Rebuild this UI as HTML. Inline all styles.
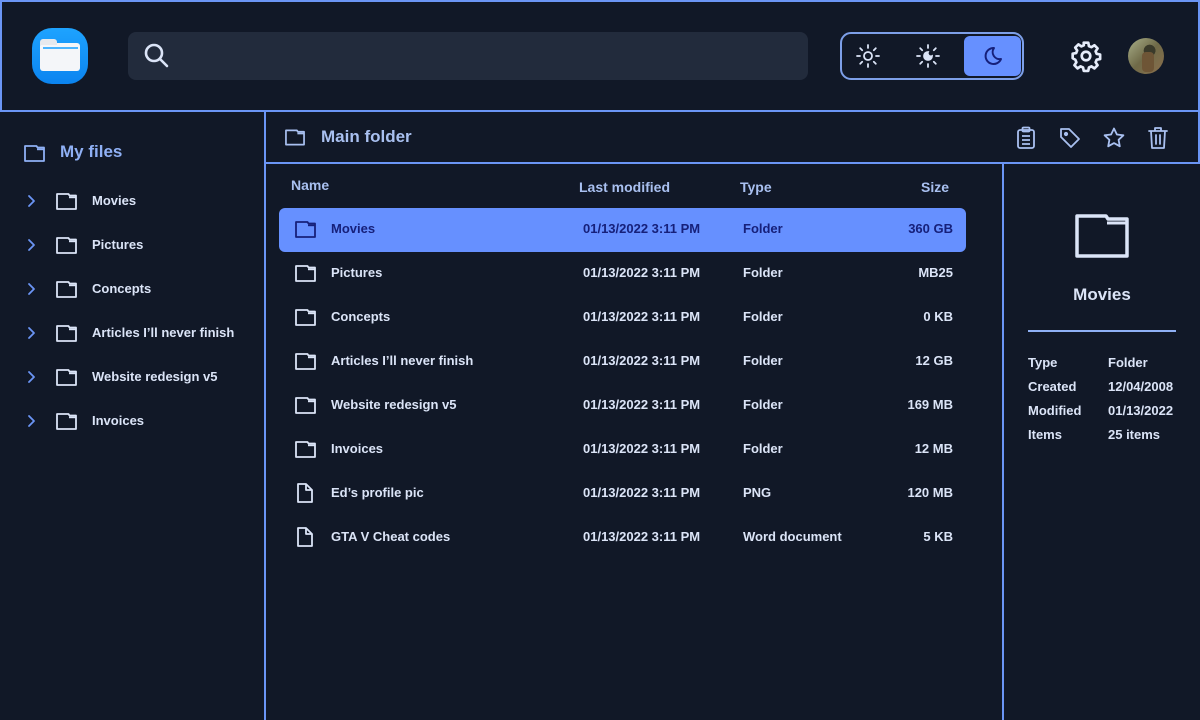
<!DOCTYPE html>
<html><head><meta charset="utf-8"><style>
*{margin:0;padding:0;box-sizing:border-box}
body{width:1200px;height:720px;background:#111827;font-family:"Liberation Sans",sans-serif;color:#dbe4f7;position:relative;overflow:hidden;font-weight:bold}
.abs{position:absolute}
.line{position:absolute;background:#6b95f5}
.t{position:absolute;font-size:13px;line-height:16px;white-space:nowrap}
svg{position:absolute;overflow:visible}
</style></head><body>
<div class="line" style="left:0;top:0;width:1200px;height:2px"></div>
<div class="line" style="left:0;top:0;width:2px;height:112px"></div>
<div class="line" style="left:1198px;top:0;width:2px;height:164px"></div>
<div class="line" style="left:0;top:110px;width:1200px;height:2px"></div>
<div class="line" style="left:264px;top:112px;width:2px;height:608px"></div>
<div class="line" style="left:264px;top:162px;width:936px;height:2px"></div>
<div class="line" style="left:1002px;top:164px;width:2px;height:556px"></div>

<div class="abs" style="left:32px;top:28px;width:56px;height:56px;border-radius:20px;background:linear-gradient(#1ea3ff,#0b84f0)"></div>
<div class="abs" style="left:40px;top:43px;width:40px;height:28px;border-radius:3px;background:#f4f6f9"></div>
<div class="abs" style="left:40px;top:39px;width:17px;height:6px;border-radius:3px 3px 0 0;background:#e6e9ee"></div>
<div class="abs" style="left:43px;top:47px;width:35px;height:2px;background:#4bb5ff"></div>

<div class="abs" style="left:128px;top:32px;width:680px;height:48px;border-radius:8px;background:#222b3c"></div>
<svg style="left:143px;top:42px" width="26" height="26" viewBox="0 0 26 26"><circle cx="11" cy="11" r="8" fill="none" stroke="#dbe4f7" stroke-width="2.6"/><path d="M17 17L24 24" stroke="#dbe4f7" stroke-width="2.6" stroke-linecap="round"/></svg>

<div class="abs" style="left:840px;top:32px;width:184px;height:48px;border:2px solid #7d9fe8;border-radius:11px"></div>
<div class="abs" style="left:964px;top:36px;width:57px;height:40px;border-radius:6px;background:#6690ff"></div>
<svg style="left:856px;top:44px" width="24" height="24" viewBox="0 0 24 24" fill="none" stroke="#dbe4f7" stroke-width="1.8" stroke-linecap="round"><circle cx="12" cy="12" r="4"/><path d="M12 1v3M12 20v3M1 12h3M20 12h3M4.2 4.2l2 2M17.8 17.8l2 2M4.2 19.8l2-2M17.8 6.2l2-2"/></svg>
<svg style="left:916px;top:44px" width="24" height="24" viewBox="0 0 24 24" fill="none" stroke="#dbe4f7" stroke-width="1.8" stroke-linecap="round"><path d="M12 8a4 4 0 1 0 4 4a3 3 0 0 1-4-4z" fill="#dbe4f7"/><path d="M12 1v3M12 20v3M1 12h3M20 12h3M4.2 4.2l2 2M17.8 17.8l2 2M4.2 19.8l2-2M17.8 6.2l2-2"/></svg>
<svg style="left:981px;top:45px" width="22" height="22" viewBox="0 0 22 22"><path d="M13 3a8 8 0 1 0 7 11a7 7 0 0 1-7-11z" fill="none" stroke="#16207a" stroke-width="2" stroke-linejoin="round"/></svg>

<svg style="left:1070px;top:40px" width="32" height="32" viewBox="0 0 24 24" fill="none" stroke="#e6ecfa" stroke-width="2" stroke-linejoin="round"><path d="M10.3 2h3.4l.5 2.6 1.9.8 2.2-1.5 2.4 2.4-1.5 2.2.8 1.9 2.6.5v3.4l-2.6.5-.8 1.9 1.5 2.2-2.4 2.4-2.2-1.5-1.9.8-.5 2.6h-3.4l-.5-2.6-1.9-.8-2.2 1.5-2.4-2.4 1.5-2.2-.8-1.9L2 13.7v-3.4l2.6-.5.8-1.9-1.5-2.2 2.4-2.4 2.2 1.5 1.9-.8z"/><circle cx="12" cy="12" r="3.2"/></svg>
<div class="abs" style="left:1128px;top:38px;width:36px;height:36px;border-radius:50%;background:radial-gradient(circle at 60% 35%,#3a3a2a 0 18%,transparent 19%),linear-gradient(135deg,#a9b08a,#6f6a48 50%,#8a6e4c)"></div>
<div class="abs" style="left:1142px;top:52px;width:12px;height:20px;border-radius:4px;background:#6e5536"></div>

<svg style="left:24px;top:145px" width="21" height="17" viewBox="0 0 21 17" fill="none" stroke="#8fb0f5" stroke-width="1.8" stroke-linejoin="round"><path d="M1 1H12.5L13.5 2.5H20V16H1Z"/><path d="M13 4.3H19.5"/></svg>
<div class="t" style="left:60px;top:142px;font-size:17px;line-height:20px;color:#8fb0f5">My files</div>
<div id="side"></div>

<svg style="left:285px;top:129px" width="20" height="17" viewBox="0 0 21 17" fill="none" stroke="#a9c0f0" stroke-width="1.8" stroke-linejoin="round"><path d="M1 1H12.5L13.5 2.5H20V16H1Z"/><path d="M13 4.3H19.5"/></svg>
<div class="t" style="left:321px;top:127px;font-size:17px;line-height:20px;color:#a9c0f0">Main folder</div>
<svg style="left:1016px;top:126px" width="20" height="24" viewBox="0 0 20 24" fill="none" stroke="#a9c0f0" stroke-width="1.8" stroke-linejoin="round"><rect x="2" y="4" width="16" height="18" rx="2"/><rect x="6.5" y="1.5" width="7" height="4" rx="1"/><path d="M6 10h8M6 14h8M6 18h8"/></svg>
<svg style="left:1058px;top:126px" width="24" height="24" viewBox="0 0 24 24" fill="none" stroke="#a9c0f0" stroke-width="1.8" stroke-linejoin="round"><path d="M3 3h8l10 10-8 8L3 11z"/><circle cx="8" cy="8" r="1.2" fill="#a9c0f0"/></svg>
<svg style="left:1102px;top:126px" width="24" height="24" viewBox="0 0 24 24" fill="none" stroke="#a9c0f0" stroke-width="1.8" stroke-linejoin="round"><path d="M12 2.5l2.9 6 6.5.8-4.8 4.5 1.2 6.5L12 17.1l-5.8 3.2 1.2-6.5L2.6 9.3l6.5-.8z"/></svg>
<svg style="left:1147px;top:126px" width="22" height="24" viewBox="0 0 22 24" fill="none" stroke="#a9c0f0" stroke-width="1.8" stroke-linecap="round" stroke-linejoin="round"><path d="M2 5h18M8 5V2h6v3M4 5l1 17h12l1-17M9 9v9M13 9v9"/></svg>

<div class="t" style="left:291px;top:177px;font-size:14px;color:#a9c0f0">Name</div>
<div class="t" style="left:579px;top:179px;font-size:14px;color:#a9c0f0">Last modified</div>
<div class="t" style="left:740px;top:179px;font-size:14px;color:#a9c0f0">Type</div>
<div class="t" style="left:900px;width:49px;text-align:right;top:179px;font-size:14px;color:#a9c0f0">Size</div>
<div class="abs" style="left:279px;top:208px;width:687px;height:44px;border-radius:6px;background:#6690ff"></div>
<div id="rows"></div>

<svg style="left:1075px;top:214px" width="54" height="44" viewBox="0 0 54 44" fill="none" stroke="#dbe4f7" stroke-width="3.5" stroke-linejoin="round"><path d="M2 2H31L33 5H52V42H2Z"/><path d="M32 9H51" stroke-width="3"/></svg>
<div class="t" style="left:1002px;width:200px;text-align:center;top:285px;font-size:17px;line-height:20px">Movies</div>
<div class="abs" style="left:1028px;top:330px;width:148px;height:2px;background:#8fb0f5"></div>
<div class="t" style="left:1028px;top:355px">Type</div><div class="t" style="left:1108px;top:355px">Folder</div>
<div class="t" style="left:1028px;top:379px">Created</div><div class="t" style="left:1108px;top:379px">12/04/2008</div>
<div class="t" style="left:1028px;top:403px">Modified</div><div class="t" style="left:1108px;top:403px">01/13/2022</div>
<div class="t" style="left:1028px;top:427px">Items</div><div class="t" style="left:1108px;top:427px">25 items</div>

<script>
var fold='<path d="M1 1H12.5L13.5 2.5H20V16H1Z"/><path d="M13 4.3H19.5"/>';
var s='',names=["Movies","Pictures","Concepts","Articles I’ll never finish","Website redesign v5","Invoices"];
names.forEach(function(n,i){var y=200+i*44;
s+='<svg style="left:26px;top:'+(y-6)+'px" width="10" height="14" viewBox="0 0 10 14" fill="none" stroke="#6b95f5" stroke-width="1.8" stroke-linecap="round" stroke-linejoin="round"><path d="M3 2l5 5-5 5"/></svg>';
s+='<svg style="left:56px;top:'+(y-7)+'px" width="21" height="17" viewBox="0 0 21 17" fill="none" stroke="#dbe4f7" stroke-width="1.8" stroke-linejoin="round">'+fold+'</svg>';
s+='<div class="t" style="left:92px;top:'+(y-7)+'px">'+n+'</div>';});
document.getElementById('side').outerHTML=s;
var rows=[["Movies","Folder","360 GB"],["Pictures","Folder","MB25"],["Concepts","Folder","0 KB"],["Articles I’ll never finish","Folder","12 GB"],["Website redesign v5","Folder","169 MB"],["Invoices","Folder","12 MB"],["Ed’s profile pic","PNG","120 MB"],["GTA V Cheat codes","Word document","5 KB"]];
var r='';rows.forEach(function(a,i){var y=229+i*44,c=i==0?'#16207a':'#dbe4f7';
var ic=i<6?'<svg style="left:295px;top:'+(y-8)+'px" width="21" height="17" viewBox="0 0 21 17" fill="none" stroke="'+c+'" stroke-width="1.8" stroke-linejoin="round">'+fold+'</svg>'
:'<svg style="left:297px;top:'+(y-10)+'px" width="16" height="20" viewBox="0 0 16 20" fill="none" stroke="'+c+'" stroke-width="1.8" stroke-linejoin="round"><path d="M1 1H9L15 7V19H1Z"/><path d="M9 1V7H15"/></svg>';
r+=ic+'<div class="t" style="color:'+c+';left:331px;top:'+(y-8)+'px">'+a[0]+'</div><div class="t" style="color:'+c+';left:583px;top:'+(y-8)+'px">01/13/2022 3:11 PM</div><div class="t" style="color:'+c+';left:743px;top:'+(y-8)+'px">'+a[1]+'</div><div class="t" style="color:'+c+';left:853px;width:100px;text-align:right;top:'+(y-8)+'px">'+a[2]+'</div>';});
document.getElementById('rows').outerHTML=r;
</script>
</body></html>
